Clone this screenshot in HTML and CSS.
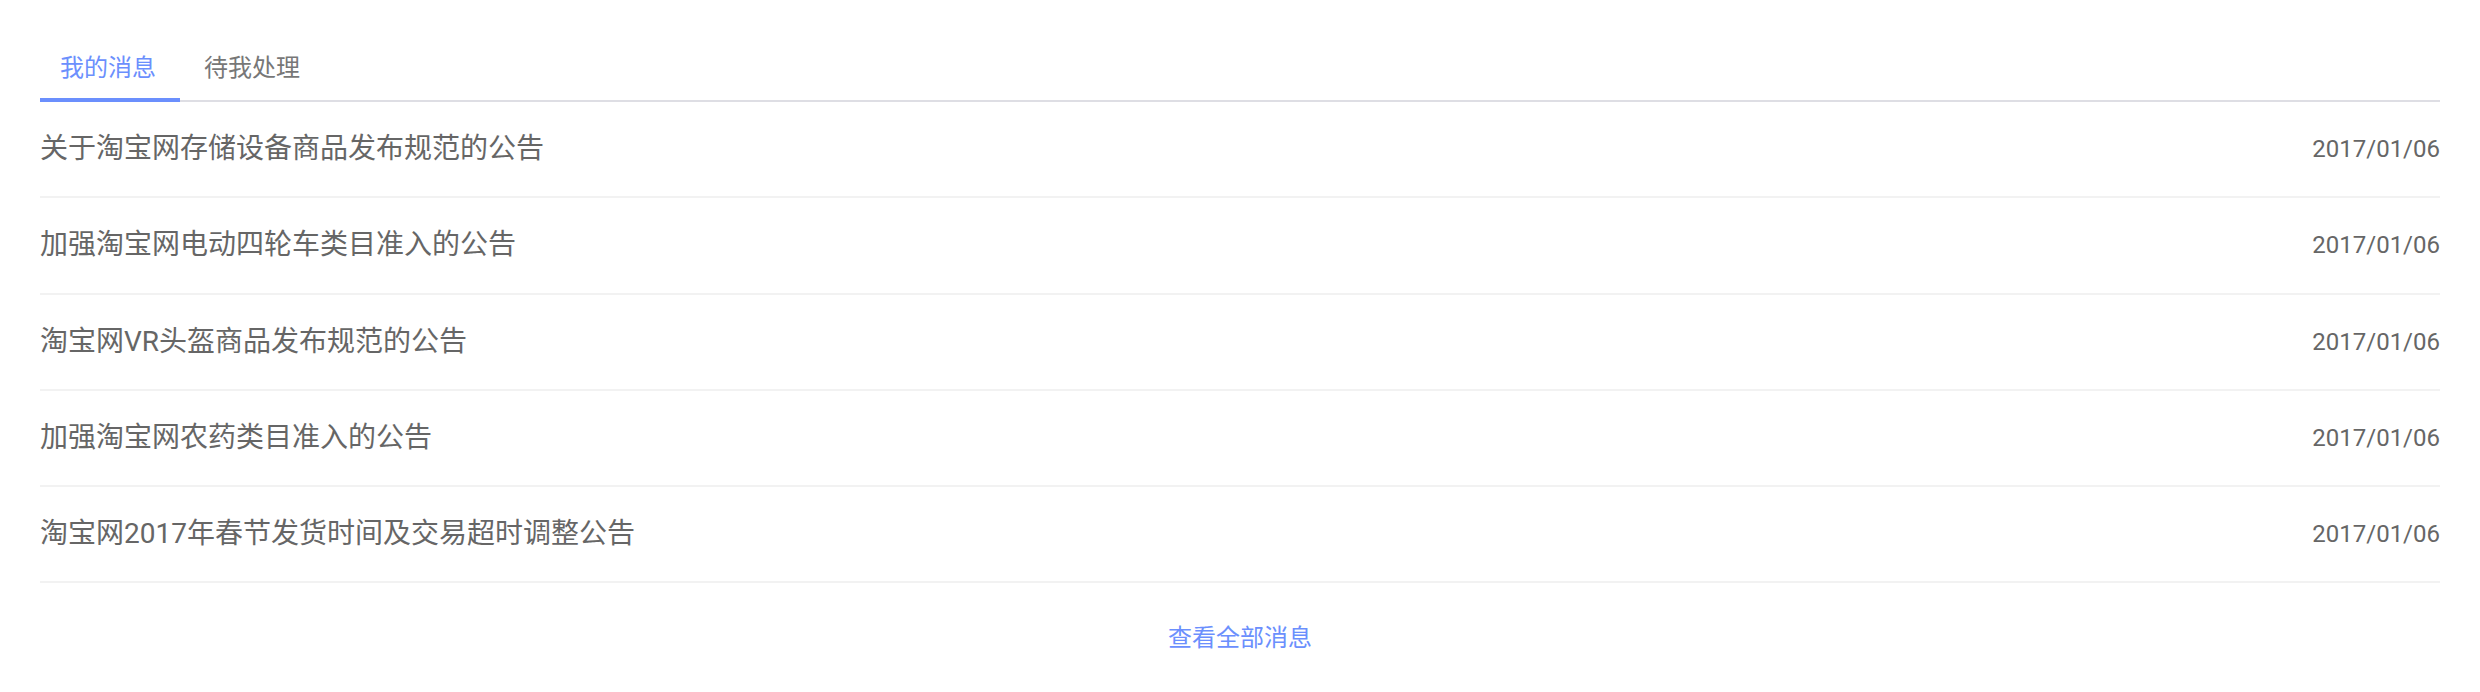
FILE: index.html
```html
<!DOCTYPE html>
<html lang="zh-CN">
<head>
<meta charset="utf-8">
<title>消息</title>
<link rel="stylesheet" href="styles.css">
</head>
<body>
<div class="panel">
  <div class="tabs">
    <div class="tab active">我的消息</div>
    <div class="tab">待我处理</div>
  </div>
  <ul class="list">
    <li class="row"><span class="title">关于淘宝网存储设备商品发布规范的公告</span><span class="date">2017/01/06</span></li>
    <li class="row"><span class="title">加强淘宝网电动四轮车类目准入的公告</span><span class="date">2017/01/06</span></li>
    <li class="row"><span class="title">淘宝网VR头盔商品发布规范的公告</span><span class="date">2017/01/06</span></li>
    <li class="row"><span class="title">加强淘宝网农药类目准入的公告</span><span class="date">2017/01/06</span></li>
    <li class="row"><span class="title">淘宝网2017年春节发货时间及交易超时调整公告</span><span class="date">2017/01/06</span></li>
  </ul>
  <div class="footer"><a class="more">查看全部消息</a></div>
</div>
</body>
</html>
```

FILE: styles.css
```css
html, body {
  margin: 0;
  padding: 0;
  background: #ffffff;
}
body {
  font-family: Roboto, "Noto Sans CJK SC", "Noto Sans", sans-serif;
  color: #666666;
}
.panel {
  padding: 30px 40px 0 40px;
}
.tabs {
  display: flex;
  border-bottom: 2px solid #dedee4;
}
.tab {
  position: relative;
  padding: 20px 24px 14px 20px;
  margin-right: 4px;
  font-size: 24px;
  line-height: 36px;
  color: #777777;
}
.tab.active {
  color: #6b8ffd;
}
.tab.active::after {
  content: "";
  position: absolute;
  left: 0;
  right: 0;
  bottom: -2px;
  height: 4px;
  background: #6b8ffd;
}
.list {
  list-style: none;
  margin: 0;
  padding: 0;
}
.row {
  display: flex;
  align-items: center;
  justify-content: space-between;
  box-sizing: border-box;
  height: 96.25px;
  border-bottom: 2px solid #f2f2f2;
}
.title {
  font-size: 28px;
  line-height: 40px;
  color: #666666;
}
.date {
  font-size: 24px;
  line-height: 36px;
  color: #666666;
}
.footer {
  display: flex;
  justify-content: center;
  padding-top: 37px;
}
.more {
  font-size: 24px;
  line-height: 36px;
  color: #6b8ffd;
  cursor: pointer;
}
```
